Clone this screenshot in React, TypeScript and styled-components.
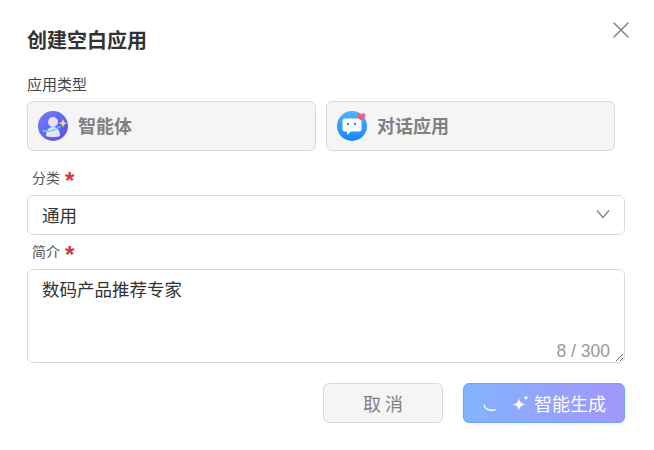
import React from 'react';
import styled, { createGlobalStyle } from 'styled-components';

const GlobalStyle = createGlobalStyle`
  html, body {
    margin: 0;
    padding: 0;
    background: #fff;
  }
  body {
    font-family: "Noto Sans CJK SC", "Liberation Sans", sans-serif;
    color: #333;
  }
  * { box-sizing: border-box; }
`;

const Dialog = styled.div`
  position: relative;
  width: 654px;
  height: 450px;
  padding: 26px 29px 0 27px;
  overflow: hidden;
`;

const Title = styled.h2`
  margin: 0;
  height: 28px;
  line-height: 28px;
  font-size: 20px;
  font-weight: 700;
  color: #333;
`;

const CloseButton = styled.button`
  position: absolute;
  top: 21px;
  right: 24px;
  width: 18px;
  height: 18px;
  padding: 0;
  border: 0;
  background: none;
  display: flex;
`;

const TypeLabel = styled.div`
  margin-top: 19px;
  height: 22px;
  line-height: 22px;
  font-size: 15px;
  color: #444;
`;

const TypeRow = styled.div`
  display: flex;
  gap: 10px;
  margin-top: 6px;
  padding-right: 10px;
`;

const TypeCard = styled.div`
  flex: 1;
  height: 50px;
  display: flex;
  align-items: center;
  gap: 10px;
  padding-left: 10px;
  background: #f5f5f5;
  border: 1px solid #d9d9d9;
  border-radius: 6px;
  font-size: 18px;
  font-weight: 700;
  color: #808080;
`;

const TypeName = styled.span`
  padding-bottom: 3px;
`;

const FieldLabel = styled.div`
  display: flex;
  align-items: center;
  gap: 5px;
  height: 22px;
  padding-left: 5px;
  margin-top: ${(p: { $top: number }) => p.$top}px;
  margin-bottom: 7px;
  font-size: 14px;
  color: #555;
`;

const Star = styled.span`
  color: #d0393e;
  font-size: 24px;
  font-weight: 700;
  line-height: 22px;
  height: 14px;
  font-family: "Liberation Sans", sans-serif;
`;

const SelectBox = styled.div`
  height: 40px;
  display: flex;
  align-items: center;
  justify-content: space-between;
  padding: 0 14px 2px;
  border: 1px solid #d9d9d9;
  border-radius: 6px;
  font-size: 17.5px;
  color: #333;
`;

const TextAreaWrap = styled.div`
  position: relative;
  height: 94px;
`;

const TextArea = styled.textarea`
  display: block;
  width: 100%;
  height: 94px;
  padding: 7px 14px;
  border: 1px solid #d9d9d9;
  border-radius: 6px;
  outline: none;
  resize: vertical;
  font-family: inherit;
  font-size: 17.5px;
  line-height: 24px;
  color: #333;
`;

const Counter = styled.span`
  position: absolute;
  right: 15px;
  bottom: 1px;
  font-family: "Liberation Sans", sans-serif;
  font-size: 17.5px;
  line-height: 22px;
  color: #999;
`;

const Footer = styled.div`
  display: flex;
  justify-content: flex-end;
  gap: 20px;
  margin-top: 20px;
`;

const CancelButton = styled.button`
  width: 120px;
  height: 40px;
  padding: 0 0 0 4px;
  border: 1px solid #d9d9d9;
  border-radius: 6px;
  background: #f5f5f5;
  font-family: inherit;
  font-size: 18px;
  letter-spacing: 4px;
  color: #808080;
`;

const GenerateButton = styled.button`
  position: relative;
  width: 162px;
  height: 40px;
  display: flex;
  align-items: center;
  padding: 0 0 0 47px;
  gap: 3px;
  border: 1px solid #6ea6ee;
  border-radius: 6px;
  background: linear-gradient(90deg, #83b3fd 0%, #a296fb 100%);
  box-shadow: 0 2px 4px rgba(0, 0, 0, 0.06);
  font-family: inherit;
  font-size: 18px;
  color: #fff;
`;

const Spinner = styled.svg`
  position: absolute;
  left: 18px;
  top: 20px;
`;

const AgentIcon = () => (
  <svg width="30" height="30" viewBox="0 0 30 30">
    <defs>
      <linearGradient id="agentBg" x1="0" y1="0" x2="1" y2="1">
        <stop offset="0" stopColor="#6f7ff5" />
        <stop offset="1" stopColor="#5a4fe8" />
      </linearGradient>
    </defs>
    <circle cx="15" cy="15" r="15" fill="url(#agentBg)" />
    <circle cx="15" cy="11" r="5" fill="#e6e2fb" />
    <path d="M8 25c0-6 3-9 7-9s7 3 7 9c-2 1.500-12 1.500-14 0z" fill="#e6e2fb" />
    <path d="M5 19.500c5 2 12 0 17-4" fill="none" stroke="#5fd6e8" strokeWidth="1.400" strokeLinecap="round" />
    <path d="M25 8l1.200 3 3 1.200-3 1.200-1.200 3-1.200-3-3-1.200 3-1.200z" fill="#f7d774" />
  </svg>
);

const ChatIcon = () => (
  <svg width="30" height="30" viewBox="0 0 30 30">
    <defs>
      <linearGradient id="chatBg" x1="0" y1="0" x2="0" y2="1">
        <stop offset="0" stopColor="#4fb4ff" />
        <stop offset="1" stopColor="#1a86fb" />
      </linearGradient>
    </defs>
    <circle cx="15" cy="15" r="15" fill="url(#chatBg)" />
    <path d="M8 7.500h14a2.500 2.500 0 0 1 2.500 2.500v8a2.500 2.500 0 0 1-2.500 2.500h-8l-4 3.500v-3.500h-2a2.500 2.500 0 0 1-2.500-2.500v-8a2.500 2.500 0 0 1 2.500-2.500z" fill="#fff" />
    <circle cx="11" cy="13" r="1.200" fill="#3b8ff0" />
    <circle cx="18" cy="13" r="1.200" fill="#3b8ff0" />
    <path d="M19.500 4.500c0-2.500 3.500-3 4.500-.8 1-2.200 4.500-1.700 4.500.8 0 2-2.500 3.500-4.500 5-2-1.500-4.500-3-4.500-5z" fill="#f0607a" />
  </svg>
);

const Sparkle = () => (
  <svg width="20" height="20" viewBox="0 0 20 20" fill="#fff">
    <path d="M8 5c.7 4.200 2.300 5.800 6.500 6.500C10.300 12.200 8.700 13.800 8 18 7.300 13.800 5.700 12.200 1.500 11.500 5.700 10.800 7.300 9.200 8 5z" />
    <path d="M15 2c.3 1.800 1 2.500 2.800 2.800C16 5.100 15.300 5.800 15 7.600c-.3-1.800-1-2.500-2.800-2.800C14 4.500 14.700 3.800 15 2z" />
  </svg>
);

export default function App() {
  return (
    <Dialog>
      <GlobalStyle />
      <Title>创建空白应用</Title>
      <CloseButton aria-label="关闭">
        <svg width="18" height="18" viewBox="0 0 18 18">
          <path d="M2 2l14 14M16 2L2 16" stroke="#858585" strokeWidth="1.500" strokeLinecap="round" />
        </svg>
      </CloseButton>

      <TypeLabel>应用类型</TypeLabel>
      <TypeRow>
        <TypeCard>
          <AgentIcon />
          <TypeName>智能体</TypeName>
        </TypeCard>
        <TypeCard>
          <ChatIcon />
          <TypeName>对话应用</TypeName>
        </TypeCard>
      </TypeRow>

      <FieldLabel $top={15}>
        分类<Star>*</Star>
      </FieldLabel>
      <SelectBox>
        通用
        <svg width="14" height="10" viewBox="0 0 14 10">
          <path d="M1 1.500l6 7 6-7" fill="none" stroke="#808080" strokeWidth="1.200" />
        </svg>
      </SelectBox>

      <FieldLabel $top={5}>
        简介<Star>*</Star>
      </FieldLabel>
      <TextAreaWrap>
        <TextArea readOnly value="数码产品推荐专家" />
        <Counter>8 / 300</Counter>
      </TextAreaWrap>

      <Footer>
        <CancelButton>取消</CancelButton>
        <GenerateButton>
          <Spinner width="16" height="14" viewBox="0 0 16 14">
            <path d="M2 1c.5 4 4.500 6 11 5" fill="none" stroke="#fff" strokeWidth="1.300" strokeLinecap="round" />
          </Spinner>
          <Sparkle />
          智能生成
        </GenerateButton>
      </Footer>
    </Dialog>
  );
}
